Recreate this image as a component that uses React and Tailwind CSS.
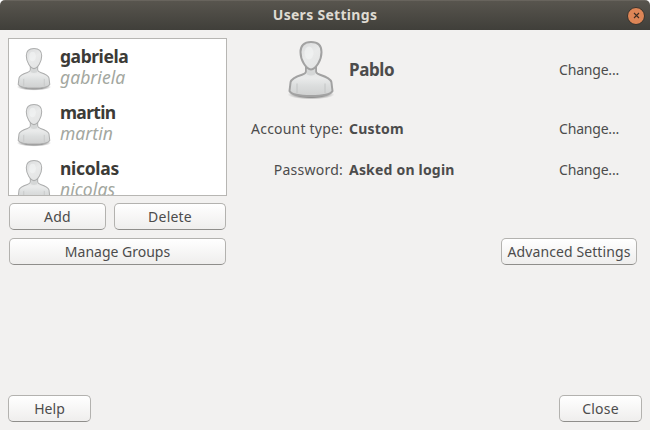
import React from "react";

const users = [
  { name: "gabriela", bold: "tracking-[-0.45px]", italic: "tracking-[0.05px]" },
  { name: "martin", bold: "tracking-[-0.7px]", italic: "tracking-[0.05px]" },
  { name: "nicolas", bold: "tracking-[-0.3px]", italic: "tracking-[0.1px]" },
];

function Avatar({ id, className, stroke, line }) {
  return (
    <svg viewBox="0 0 46 60" className={className} aria-hidden="true">
      <defs>
        <linearGradient id={`${id}-head`} x1="0" y1="0" x2="0.5" y2="1">
          <stop offset="0" stopColor="#d9dadb" />
          <stop offset="0.55" stopColor="#e9eaea" />
          <stop offset="1" stopColor="#e4e5e5" />
        </linearGradient>
        <linearGradient id={`${id}-body`} x1="0" y1="0" x2="0" y2="1">
          <stop offset="0" stopColor="#dcdede" />
          <stop offset="0.4" stopColor="#eaebeb" />
          <stop offset="0.65" stopColor="#dcdede" />
          <stop offset="1" stopColor="#cfd0d0" />
        </linearGradient>
        <radialGradient id={`${id}-shade`}>
          <stop offset="0.6" stopColor="#666" stopOpacity="0.7" />
          <stop offset="1" stopColor="#999" stopOpacity="0" />
        </radialGradient>
      </defs>
      <ellipse cx="23" cy="54.500" rx="23.500" ry="5" fill={`url(#${id}-shade)`} />
      <path
        d="M18 26v5.500c0 1.600-1.500 2.400-4 3.200C8.500 36.500 3.500 38.500 2.600 42L1.500 51c1.500 3 9 5 21.500 5s20-2 21.500-5L43.400 42c-.9-3.500-5.900-5.500-11.400-7.300-2.500-.8-4-1.600-4-3.200V26z"
        fill={`url(#${id}-body)`}
        stroke={stroke}
        strokeWidth={line}
        strokeLinejoin="round"
      />
      <path d="M18.800 29h8.400v3.500c1 2-1.500 3-4.200 3s-5.200-1-4.200-3z" fill="#d5d7d7" />
      <path d="M9 43.500v9.500M37 43.500v9.500" fill="none" stroke="#c2c4c4" strokeWidth="1" />
      <path
        d="M23 2c-7.200 0-10.500 4-10.500 10 0 4 1.300 8.300 3.300 11.600 2 3.300 4.500 5.900 7.200 5.900s5.200-2.600 7.200-5.900C32.200 20.300 33.500 16 33.500 12 33.500 6 30.200 2 23 2z"
        fill={`url(#${id}-head)`}
        stroke={stroke}
        strokeWidth={line}
      />
      <ellipse cx="21" cy="13" rx="4.500" ry="6.500" fill="#f4f5f5" opacity=".6" />
    </svg>
  );
}

function Button({ className, children }) {
  return (
    <button
      className={`flex h-[27px] items-center justify-center rounded-[5px] border border-[#b3b2af] border-b-[#8f8e8b] bg-linear-to-b from-white to-[#efeeed] whitespace-nowrap text-[14px] leading-none ${className}`}
    >
      {children}
    </button>
  );
}

function Row({ label, labelClass, value, valueClass, className }) {
  return (
    <div className={`flex items-center ${className}`}>
      <span className={`w-[94px] shrink-0 text-right whitespace-nowrap ${labelClass}`}>{label}</span>
      <span className={`ml-[6px] font-bold whitespace-nowrap ${valueClass}`}>{value}</span>
      <span className="mr-[31px] ml-auto tracking-[-0.2px]">Change...</span>
    </div>
  );
}

export default function App() {
  return (
    <div className="h-[430px] w-[650px] overflow-hidden bg-white font-['Noto_Sans','Open_Sans',sans-serif] text-[14px] leading-[20px] text-[#4c4c4c]">
      <div className="flex h-full flex-col overflow-hidden rounded-t-[5px] bg-[#f2f1f0]">
        <header className="grid h-[30px] shrink-0 grid-cols-[1fr_auto_1fr] items-center border-t border-[#68645d] bg-linear-to-b from-[#58554e] to-[#403f3a]">
          <span />
          <h1 className="pb-[2px] text-[14px] leading-none font-bold tracking-[0.3px] text-[#dfdbd2]">Users Settings</h1>
          <button className="mr-[5px] flex size-[18px] items-center justify-center justify-self-end rounded-full border border-[#36332e] bg-[#dd8556]" aria-label="Close window">
            <svg viewBox="0 0 7 7" className="size-[7px]">
              <path d="M1 1l5 5M6 1L1 6" stroke="#3d2d23" strokeWidth="1.100" />
            </svg>
          </button>
        </header>

        <main className="flex pt-[8px]">
          <section className="ml-[8px] w-[219px] shrink-0">
            <ul className="h-[158px] overflow-hidden border border-[#b7b6b3] bg-white">
              {users.map((u) => (
                <li key={u.name} className="flex h-[56px] pt-[7px] pl-[8px]">
                  <Avatar id={u.name} className="mt-[1px] h-[44px] w-[34px] shrink-0" stroke="#adaeae" line="1.400" />
                  <div className="ml-[9px] flex flex-col">
                    <span className={`text-[17.500px] leading-[21px] font-bold text-[#3c3b37] ${u.bold}`}>{u.name}</span>
                    <span className={`text-[17.500px] leading-[21px] text-[#a3a7a0] italic ${u.italic}`}>{u.name}</span>
                  </div>
                </li>
              ))}
            </ul>
            <div className="mt-[7px] flex gap-[8px] px-px">
              <Button className="w-[97px] tracking-[0.2px]">Add</Button>
              <Button className="w-[112px] tracking-[0.2px]">Delete</Button>
            </div>
            <Button className="mx-px mt-[8px] w-[217px]">Manage Groups</Button>
          </section>

          <section className="ml-[22px] flex-1">
            <div className="mt-[2px] flex h-[60px] items-center">
              <Avatar id="pablo" className="ml-[39px] h-[60px] w-[46px] shrink-0" stroke="#a2a2a2" line="2" />
              <span className="ml-[15px] text-[17px] font-bold tracking-[-0.4px]">Pablo</span>
              <span className="mr-[31px] ml-auto tracking-[-0.2px]">Change...</span>
            </div>
            <Row className="mt-[19px]" label="Account type:" labelClass="tracking-[0.2px]" value="Custom" valueClass="tracking-[0.2px]" />
            <Row className="mt-[21px]" label="Password:" labelClass="tracking-[0.25px]" value="Asked on login" valueClass="tracking-[0.2px]" />
            <Button className="mt-[58px] mr-[13px] ml-auto w-[136px] tracking-[0.1px]">Advanced Settings</Button>
          </section>
        </main>

        <footer className="mt-auto mb-[8px] flex justify-between px-[8px]">
          <Button className="w-[83px]">Help</Button>
          <Button className="w-[83px] tracking-[0.2px]">Close</Button>
        </footer>
      </div>
    </div>
  );
}
